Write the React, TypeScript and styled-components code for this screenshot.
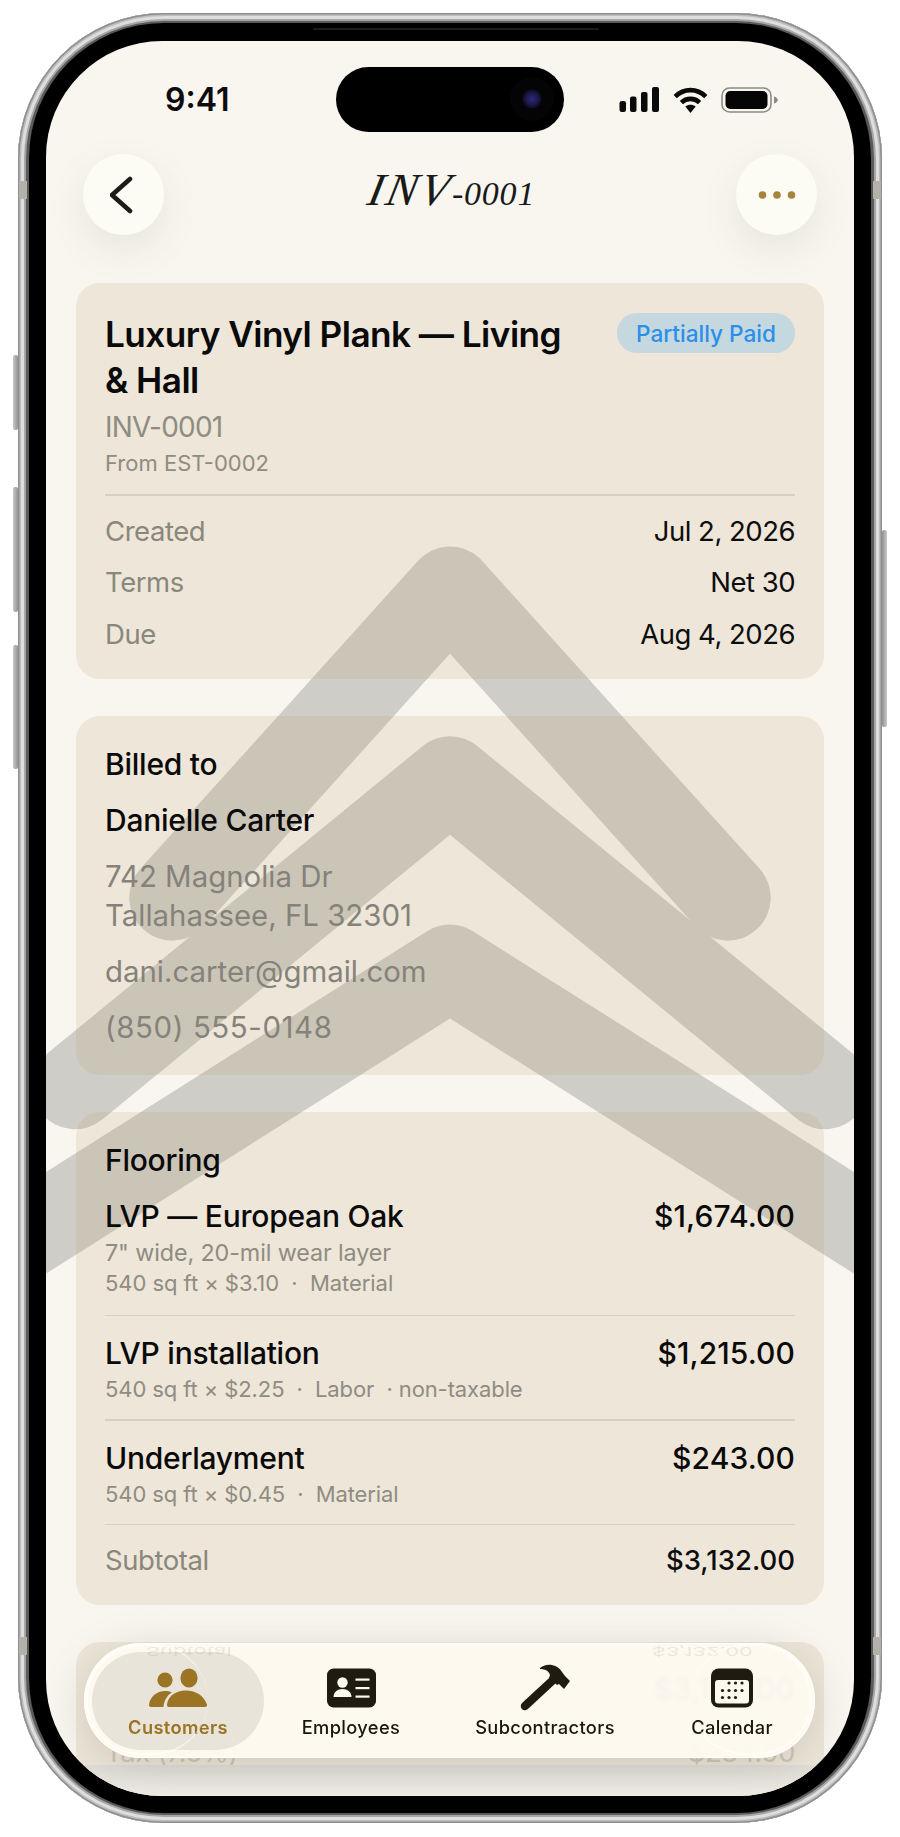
import React from "react";
import styled, { createGlobalStyle } from "styled-components";

const Global = createGlobalStyle`
  html, body { margin: 0; padding: 0; background: #fff; }
  body { font-family: Inter, "Liberation Sans", sans-serif; -webkit-font-smoothing: antialiased; }
`;

const Page = styled.div`
  width: 900px;
  height: 1837px;
  padding: 13px 18px 14px;
  box-sizing: border-box;
  overflow: hidden;
`;

const Phone = styled.div`
  position: relative;
  width: 864px;
  height: 1810px;
  box-sizing: border-box;
  padding: 10px 11px;
  border-radius: 146px;
  background: #8a8a8a;
  box-shadow: inset 0 0 0 1.5px #8f8f8f, inset 0 0 0 3px #bdbdbd, inset 0 0 0 6px #dedede, inset 0 0 0 8px #a6a6a6, inset 0 0 0 11px #5a5a5a;
`;

const SideButton = styled.div<{ $side: "left" | "right"; $top: number; $height: number }>`
  position: absolute;
  top: ${(p) => p.$top}px;
  height: ${(p) => p.$height}px;
  ${(p) => (p.$side === "left" ? "left: -5px;" : "right: -5px;")}
  width: 5px;
  border-radius: 2px;
  background: linear-gradient(${(p) => (p.$side === "left" ? "90deg" : "270deg")}, #c9c9c9, #929292);
`;

const AntennaBand = styled.div<{ $side: "left" | "right"; $top: number }>`
  position: absolute;
  top: ${(p) => p.$top}px;
  height: 18px;
  ${(p) => (p.$side === "left" ? "left: 1px;" : "right: 1px;")}
  width: 8px;
  background: #b3b1aa;
`;

const Bezel = styled.div`
  position: relative;
  height: 100%;
  box-sizing: border-box;
  padding: 18px 17px 17px;
  border-radius: 135px;
  background: #000;
`;

const Speaker = styled.div`
  position: absolute;
  top: 5px;
  left: 284px;
  width: 286px;
  height: 2px;
  border-radius: 2px;
  background: #1c1c1c;
`;

const Screen = styled.div`
  position: relative;
  height: 1755px;
  overflow: hidden;
  border-radius: 116px;
  background: #f8f6ef;
`;

const Watermark = styled.svg`
  position: absolute;
  inset: 0;
  width: 808px;
  height: 1755px;
`;

const Content = styled.div`
  position: relative;
`;

const StatusBar = styled.div`
  display: grid;
  grid-template-columns: 290px 228px 1fr;
  align-items: center;
  height: 113px;
  box-sizing: border-box;
  padding-top: 26px;
  padding-bottom: 22px;
`;

const Time = styled.div`
  padding-left: 119px;
  font-size: 32px;
  font-weight: 600;
  line-height: 65px;
  color: #0c0c0c;
`;

const Island = styled.div`
  position: relative;
  height: 65px;
  border-radius: 33px;
  background: #000;
`;

const Camera = styled.div`
  position: absolute;
  left: 186px;
  top: 22px;
  width: 20px;
  height: 20px;
  border-radius: 50%;
  background: radial-gradient(circle, #2b2a78 0%, #1a1848 45%, #080814 70%, #050508 100%);
  box-shadow: 0 0 0 12px #040406;
`;

const StatusIcons = styled.div`
  display: flex;
  align-items: center;
  gap: 13px;
  padding-left: 55px;
`;

const Header = styled.div`
  display: flex;
  align-items: center;
  justify-content: space-between;
  padding: 0 37px;
  height: 81px;
`;

const RoundButton = styled.div`
  display: flex;
  align-items: center;
  justify-content: center;
  width: 81px;
  height: 81px;
  border-radius: 50%;
  background: #fdfcf4;
  box-shadow: 0 14px 40px rgba(60, 55, 40, 0.09);
`;

const PageTitle = styled.div`
  display: flex;
  align-items: baseline;
  font-family: "Liberation Serif", serif;
  font-style: italic;
  color: #1a1a1a;
  margin: -10px 0 0 4px;
`;

const TitleCaps = styled.span`
  display: inline-block;
  font-size: 46px;
  letter-spacing: 3px;
  transform: skewX(-12deg);
`;

const TitleDigits = styled.span`
  font-size: 34px;
  letter-spacing: 0.8px;
`;

const Cards = styled.div`
  display: flex;
  flex-direction: column;
  gap: 37px;
  padding: 48px 30px 0;
`;

const Card = styled.div`
  padding: 28px 29px 27px;
  border-radius: 24px;
  background: rgba(186, 163, 116, 0.18);
`;

const TopRow = styled.div`
  display: flex;
  justify-content: space-between;
  align-items: flex-start;
`;

const InvoiceTitle = styled.div`
  width: 475px;
  font-size: 35.2px;
  font-weight: 600;
  line-height: 46px;
  letter-spacing: -0.55px;
  color: #0a0a0a;
`;

const Badge = styled.div`
  display: flex;
  align-items: center;
  height: 40px;
  margin-top: 2px;
  padding: 0 19px;
  border-radius: 20px;
  background: #c5d7df;
  color: #2a8fe8;
  font-size: 22.6px;
  font-weight: 500;
`;

const InvoiceNumber = styled.div`
  margin-top: 6px;
  font-size: 28px;
  line-height: 36px;
  letter-spacing: -0.8px;
  color: #8f8c81;
`;

const SmallNote = styled.div`
  margin-top: 3px;
  font-size: 22px;
  line-height: 30px;
  color: #8f8c81;
`;

const Divider = styled.div`
  height: 1.5px;
  background: #d6d0c2;
`;

const MetaDivider = styled(Divider)`
  margin: 16px 0 17px;
`;

const MetaRows = styled.div`
  display: flex;
  flex-direction: column;
  gap: 15.5px;
`;

const Row = styled.div`
  display: flex;
  justify-content: space-between;
  align-items: center;
`;

const MutedLabel = styled.div`
  font-size: 27.5px;
  line-height: 36px;
  letter-spacing: -0.45px;
  color: #8a877c;
`;

const Value = styled.div`
  font-size: 27.5px;
  line-height: 36px;
  letter-spacing: -0.5px;
  color: #0d0d0d;
`;

const BilledCard = styled(Card)`
  display: flex;
  flex-direction: column;
  gap: 18px;
  padding: 29px 29px 28px;
`;

const Heading = styled.div`
  font-size: 30px;
  font-weight: 500;
  line-height: 38px;
  letter-spacing: -0.25px;
  color: #0a0a0a;
`;

const ContactLine = styled.div<{ $spaced?: boolean }>`
  font-size: 29.4px;
  line-height: 38px;
  letter-spacing: ${(p) => (p.$spaced ? "0.6px" : "0")};
  color: #85827a;
`;

const AddressLine = styled(ContactLine)`
  line-height: 39px;
`;

const FlooringCard = styled(Card)`
  padding-top: 29px;
`;

const LineItem = styled.div`
  padding: 18px 0 15px;
`;

const FirstLineItem = styled(LineItem)`
  padding: 18px 0 17px;
`;

const ItemName = styled.div`
  font-size: 30px;
  font-weight: 500;
  line-height: 38px;
  letter-spacing: -0.25px;
  color: #0a0a0a;
`;

const Amount = styled.div`
  font-size: 30px;
  font-weight: 500;
  line-height: 38px;
  letter-spacing: 0.1px;
  color: #0a0a0a;
`;

const ItemSub = styled.div`
  margin-top: 2px;
  font-size: 22px;
  line-height: 30px;
  letter-spacing: -0.1px;
  color: #8f8c81;
`;

const ItemDetail = styled(ItemSub)`
  margin-top: 3px;
  font-size: 23.3px;
`;

const ItemMeta = styled(ItemSub)`
  margin-top: 0;
  letter-spacing: -0.05px;
`;

const SubtotalRow = styled(Row)`
  padding-top: 17px;
`;

const SubtotalValue = styled(Value)`
  font-weight: 500;
  letter-spacing: 0;
`;

const BehindRow = styled(Row)<{ $fade: number }>`
  margin-bottom: 26px;
  opacity: ${(p) => p.$fade};
`;

const BottomFade = styled.div`
  position: absolute;
  left: 0;
  right: 0;
  bottom: 0;
  height: 31px;
  background: linear-gradient(180deg, #e0ded7, #efede6);
`;

const Nav = styled.div`
  position: absolute;
  left: 38px;
  right: 39px;
  top: 1602px;
  height: 115px;
  box-sizing: border-box;
  display: grid;
  grid-template-columns: 172px 174px 214px 160px;
  align-items: center;
  padding: 0 3px 0 8px;
  border-radius: 57px;
  background: rgba(254, 250, 240, 0.95);
  backdrop-filter: blur(2px);
  box-shadow: 0 8px 46px rgba(50, 45, 30, 0.16), inset 0 0 0 1.5px rgba(255, 255, 255, 0.55);
`;

const GlassEcho = styled.div`
  position: absolute;
  top: 1px;
  bottom: 3px;
  width: 120px;
  border: 2px solid rgba(255, 255, 255, 0.6);
  border-radius: 56px;
  pointer-events: none;
`;

const LeftEcho = styled(GlassEcho)`
  left: 2px;
  border-right: none;
`;

const RightEcho = styled(GlassEcho)`
  right: 3px;
  border-left: none;
`;

const NavItem = styled.div<{ $active?: boolean }>`
  display: flex;
  flex-direction: column;
  align-items: center;
  justify-content: center;
  height: 98px;
  border-radius: 50px;
  background: ${(p) => (p.$active ? "#e8e4da" : "transparent")};
  color: ${(p) => (p.$active ? "#9b7424" : "#191610")};
`;

const NavIconBox = styled.div`
  display: flex;
  align-items: center;
  justify-content: center;
  height: 48px;
`;

const NavLabel = styled.div<{ $active?: boolean }>`
  margin-top: 3px;
  margin-bottom: -1px;
  font-size: 18.3px;
  line-height: 24px;
  font-weight: ${(p) => (p.$active ? 600 : 500)};
  letter-spacing: 0.35px;
`;

const Echo = styled.div`
  position: absolute;
  top: 2px;
  font-size: 22px;
  line-height: 12px;
  color: rgba(70, 70, 60, 0.1);
  transform: scaleY(-0.55);
  transform-origin: top;
  margin-top: 10px;
`;

const EchoLeft = styled(Echo)`
  left: 62px;
`;

const EchoRight = styled(Echo)`
  right: 62px;
`;

const SignalIcon = () => (
  <svg width="41" height="25" viewBox="0 0 41 25" fill="#0a0a0a">
    <rect x="0.5" y="14" width="6.5" height="11" rx="2.2" />
    <rect x="11" y="9.5" width="6.5" height="15.5" rx="2" />
    <rect x="22" y="5" width="6.5" height="20" rx="2" />
    <rect x="33" y="0" width="7" height="25" rx="2" />
  </svg>
);

const WifiIcon = () => (
  <svg width="35" height="26" viewBox="0 0 35 26" fill="none" stroke="#0a0a0a" strokeWidth="4.6">
    <path d="M2.2 9.6C11 1 24 1 32.8 9.6" />
    <path d="M8.4 15.6C13.5 10.6 21.5 10.6 26.6 15.6" />
    <path d="M12.3 19.6C15.5 17 19.5 17 22.7 19.6L17.5 26Z" fill="#0a0a0a" stroke="none" />
  </svg>
);

const BatteryIcon = () => (
  <svg width="58" height="26" viewBox="0 0 58 26">
    <rect x="1" y="1" width="49" height="24" rx="7.5" fill="none" stroke="#8b8b86" strokeWidth="1.6" />
    <rect x="4.5" y="4" width="42" height="18" rx="4.8" fill="#050505" />
    <path d="M53 9.5c2.5.6 3.8 2 3.8 3.5s-1.3 2.9-3.8 3.5z" fill="#8b8b86" />
  </svg>
);

const BackIcon = () => (
  <svg width="28" height="40" viewBox="0 0 28 40" fill="none" stroke="#1e1c17" strokeWidth="4.6" strokeLinecap="round" strokeLinejoin="round">
    <path d="M20 4L2 20l18 16" />
  </svg>
);

const MoreIcon = () => (
  <svg width="38" height="10" viewBox="0 0 38 10" fill="#a8843a">
    <circle cx="4.5" cy="5" r="3.8" />
    <circle cx="19" cy="5" r="3.8" />
    <circle cx="33.5" cy="5" r="3.8" />
  </svg>
);

const CustomersIcon = () => (
  <svg width="60" height="40" viewBox="0 0 60 40" fill="#9b7424">
    <circle cx="17" cy="12" r="7.6" />
    <ellipse cx="41" cy="10" rx="8.6" ry="9.6" />
    <path d="M1 36.8C2 28.5 9 23 17 23c2.6 0 4.8.4 6.8 1.4-4.8 3-7.6 8-8.4 14.6H3c-1.3 0-2.2-1-2-2.2z" />
    <path d="M19 36.6C20 28 28 22.5 38 22.5s18 5.5 21 14c.4 1.4-.6 2.5-2 2.5H21c-1.4 0-2.2-1-2-2.4z" />
  </svg>
);

const EmployeesIcon = () => (
  <svg width="49" height="40" viewBox="0 0 49 40">
    <rect x="0" y="0.5" width="49" height="39" rx="6.5" fill="#201b10" />
    <circle cx="15.5" cy="14.5" r="5.2" fill="#fdf9ee" />
    <path d="M6.5 29c0-5 4-8 9-8s9 3 9 8z" fill="#fdf9ee" />
    <rect x="28.5" y="10.5" width="14" height="2.2" fill="#fdf9ee" />
    <rect x="28.5" y="19" width="14" height="2.2" fill="#fdf9ee" />
    <rect x="28.5" y="27.5" width="14" height="2.2" fill="#fdf9ee" />
  </svg>
);

const HammerIcon = () => (
  <svg width="52" height="48" viewBox="0 0 52 48" fill="#201b10">
    <path d="M6 42L33 17" stroke="#201b10" strokeWidth="8.5" strokeLinecap="round" />
    <path d="M21 4C26-1 38-1 43 8l3 4 5 5-6 8-5-5-2 1-8-7 1-3C30 7 26 5 21 5z" />
  </svg>
);

const CalendarIcon = () => {
  const dots = [
    [14, 15], [20.5, 15], [27, 15],
    [7.5, 22.5], [14, 22.5], [20.5, 22.5], [27, 22.5],
    [7.5, 29.5], [14, 29.5], [20.5, 29.5],
  ];
  return (
    <svg width="42" height="40" viewBox="0 0 42 40">
      <rect x="0" y="0.5" width="42" height="39" rx="7.5" fill="#201b10" />
      <rect x="4" y="12" width="34" height="23.5" rx="3" fill="#fdf9ee" />
      {dots.map(([x, y]) => (
        <circle key={`${x}-${y}`} cx={x + 4} cy={y} r="1.6" fill="#201b10" />
      ))}
    </svg>
  );
};

export default function App() {
  return (
    <Page>
      <Global />
      <Phone>
        <SideButton $side="left" $top={342} $height={75} />
        <SideButton $side="left" $top={474} $height={125} />
        <SideButton $side="left" $top={632} $height={124} />
        <SideButton $side="right" $top={517} $height={197} />
        <AntennaBand $side="left" $top={168} />
        <AntennaBand $side="right" $top={168} />
        <AntennaBand $side="left" $top={1624} />
        <AntennaBand $side="right" $top={1624} />
        <Bezel>
          <Speaker />
          <Screen>
            <Watermark viewBox="0 0 808 1755" fill="none" stroke="#cfcdc7" strokeLinecap="round" strokeLinejoin="round">
              <g transform="translate(-46 -41) scale(1.171875)" strokeWidth="73.4">
                <path d="M147 766L384 503L621 766" />
                <path d="M64 927L384 665L704 927" />
                <path d="M-120 1144L384 825.7L888 1144" />
              </g>
            </Watermark>
            <Content>
              <StatusBar>
                <Time>9:41</Time>
                <Island>
                  <Camera />
                </Island>
                <StatusIcons>
                  <SignalIcon />
                  <WifiIcon />
                  <BatteryIcon />
                </StatusIcons>
              </StatusBar>
              <Header>
                <RoundButton>
                  <BackIcon />
                </RoundButton>
                <PageTitle>
                  <TitleCaps>INV</TitleCaps>
                  <TitleDigits>-0001</TitleDigits>
                </PageTitle>
                <RoundButton>
                  <MoreIcon />
                </RoundButton>
              </Header>
              <Cards>
                <Card>
                  <TopRow>
                    <InvoiceTitle>Luxury Vinyl Plank — Living &amp; Hall</InvoiceTitle>
                    <Badge>Partially Paid</Badge>
                  </TopRow>
                  <InvoiceNumber>INV-0001</InvoiceNumber>
                  <SmallNote>From EST-0002</SmallNote>
                  <MetaDivider />
                  <MetaRows>
                    <Row>
                      <MutedLabel>Created</MutedLabel>
                      <Value>Jul 2, 2026</Value>
                    </Row>
                    <Row>
                      <MutedLabel>Terms</MutedLabel>
                      <Value>Net 30</Value>
                    </Row>
                    <Row>
                      <MutedLabel>Due</MutedLabel>
                      <Value>Aug 4, 2026</Value>
                    </Row>
                  </MetaRows>
                </Card>
                <BilledCard>
                  <Heading>Billed to</Heading>
                  <Heading>Danielle Carter</Heading>
                  <div>
                    <AddressLine>742 Magnolia Dr</AddressLine>
                    <AddressLine>Tallahassee, FL 32301</AddressLine>
                  </div>
                  <ContactLine>dani.carter@gmail.com</ContactLine>
                  <ContactLine $spaced>(850) 555-0148</ContactLine>
                </BilledCard>
                <FlooringCard>
                  <Heading>Flooring</Heading>
                  <FirstLineItem>
                    <Row>
                      <ItemName>LVP — European Oak</ItemName>
                      <Amount>$1,674.00</Amount>
                    </Row>
                    <ItemDetail>7" wide, 20-mil wear layer</ItemDetail>
                    <ItemMeta>540 sq ft × $3.10 &nbsp;·&nbsp; Material</ItemMeta>
                  </FirstLineItem>
                  <Divider />
                  <LineItem>
                    <Row>
                      <ItemName>LVP installation</ItemName>
                      <Amount>$1,215.00</Amount>
                    </Row>
                    <ItemSub>540 sq ft × $2.25 &nbsp;·&nbsp; Labor &nbsp;· non-taxable</ItemSub>
                  </LineItem>
                  <Divider />
                  <LineItem>
                    <Row>
                      <ItemName>Underlayment</ItemName>
                      <Amount>$243.00</Amount>
                    </Row>
                    <ItemSub>540 sq ft × $0.45 &nbsp;·&nbsp; Material</ItemSub>
                  </LineItem>
                  <Divider />
                  <SubtotalRow>
                    <MutedLabel>Subtotal</MutedLabel>
                    <SubtotalValue>$3,132.00</SubtotalValue>
                  </SubtotalRow>
                </FlooringCard>
                <Card>
                  <BehindRow $fade={0.5}>
                    <MutedLabel>Subtotal</MutedLabel>
                    <Amount>$3,132.00</Amount>
                  </BehindRow>
                  <BehindRow $fade={0.32}>
                    <MutedLabel>Tax (7.5%)</MutedLabel>
                    <MutedLabel>$234.90</MutedLabel>
                  </BehindRow>
                </Card>
              </Cards>
            </Content>
            <BottomFade />
            <Nav>
              <EchoLeft>Subtotal</EchoLeft>
              <EchoRight>$3,132.00</EchoRight>
              <LeftEcho />
              <RightEcho />
              <NavItem $active>
                <NavIconBox>
                  <CustomersIcon />
                </NavIconBox>
                <NavLabel $active>Customers</NavLabel>
              </NavItem>
              <NavItem>
                <NavIconBox>
                  <EmployeesIcon />
                </NavIconBox>
                <NavLabel>Employees</NavLabel>
              </NavItem>
              <NavItem>
                <NavIconBox>
                  <HammerIcon />
                </NavIconBox>
                <NavLabel>Subcontractors</NavLabel>
              </NavItem>
              <NavItem>
                <NavIconBox>
                  <CalendarIcon />
                </NavIconBox>
                <NavLabel>Calendar</NavLabel>
              </NavItem>
            </Nav>
          </Screen>
        </Bezel>
      </Phone>
    </Page>
  );
}
